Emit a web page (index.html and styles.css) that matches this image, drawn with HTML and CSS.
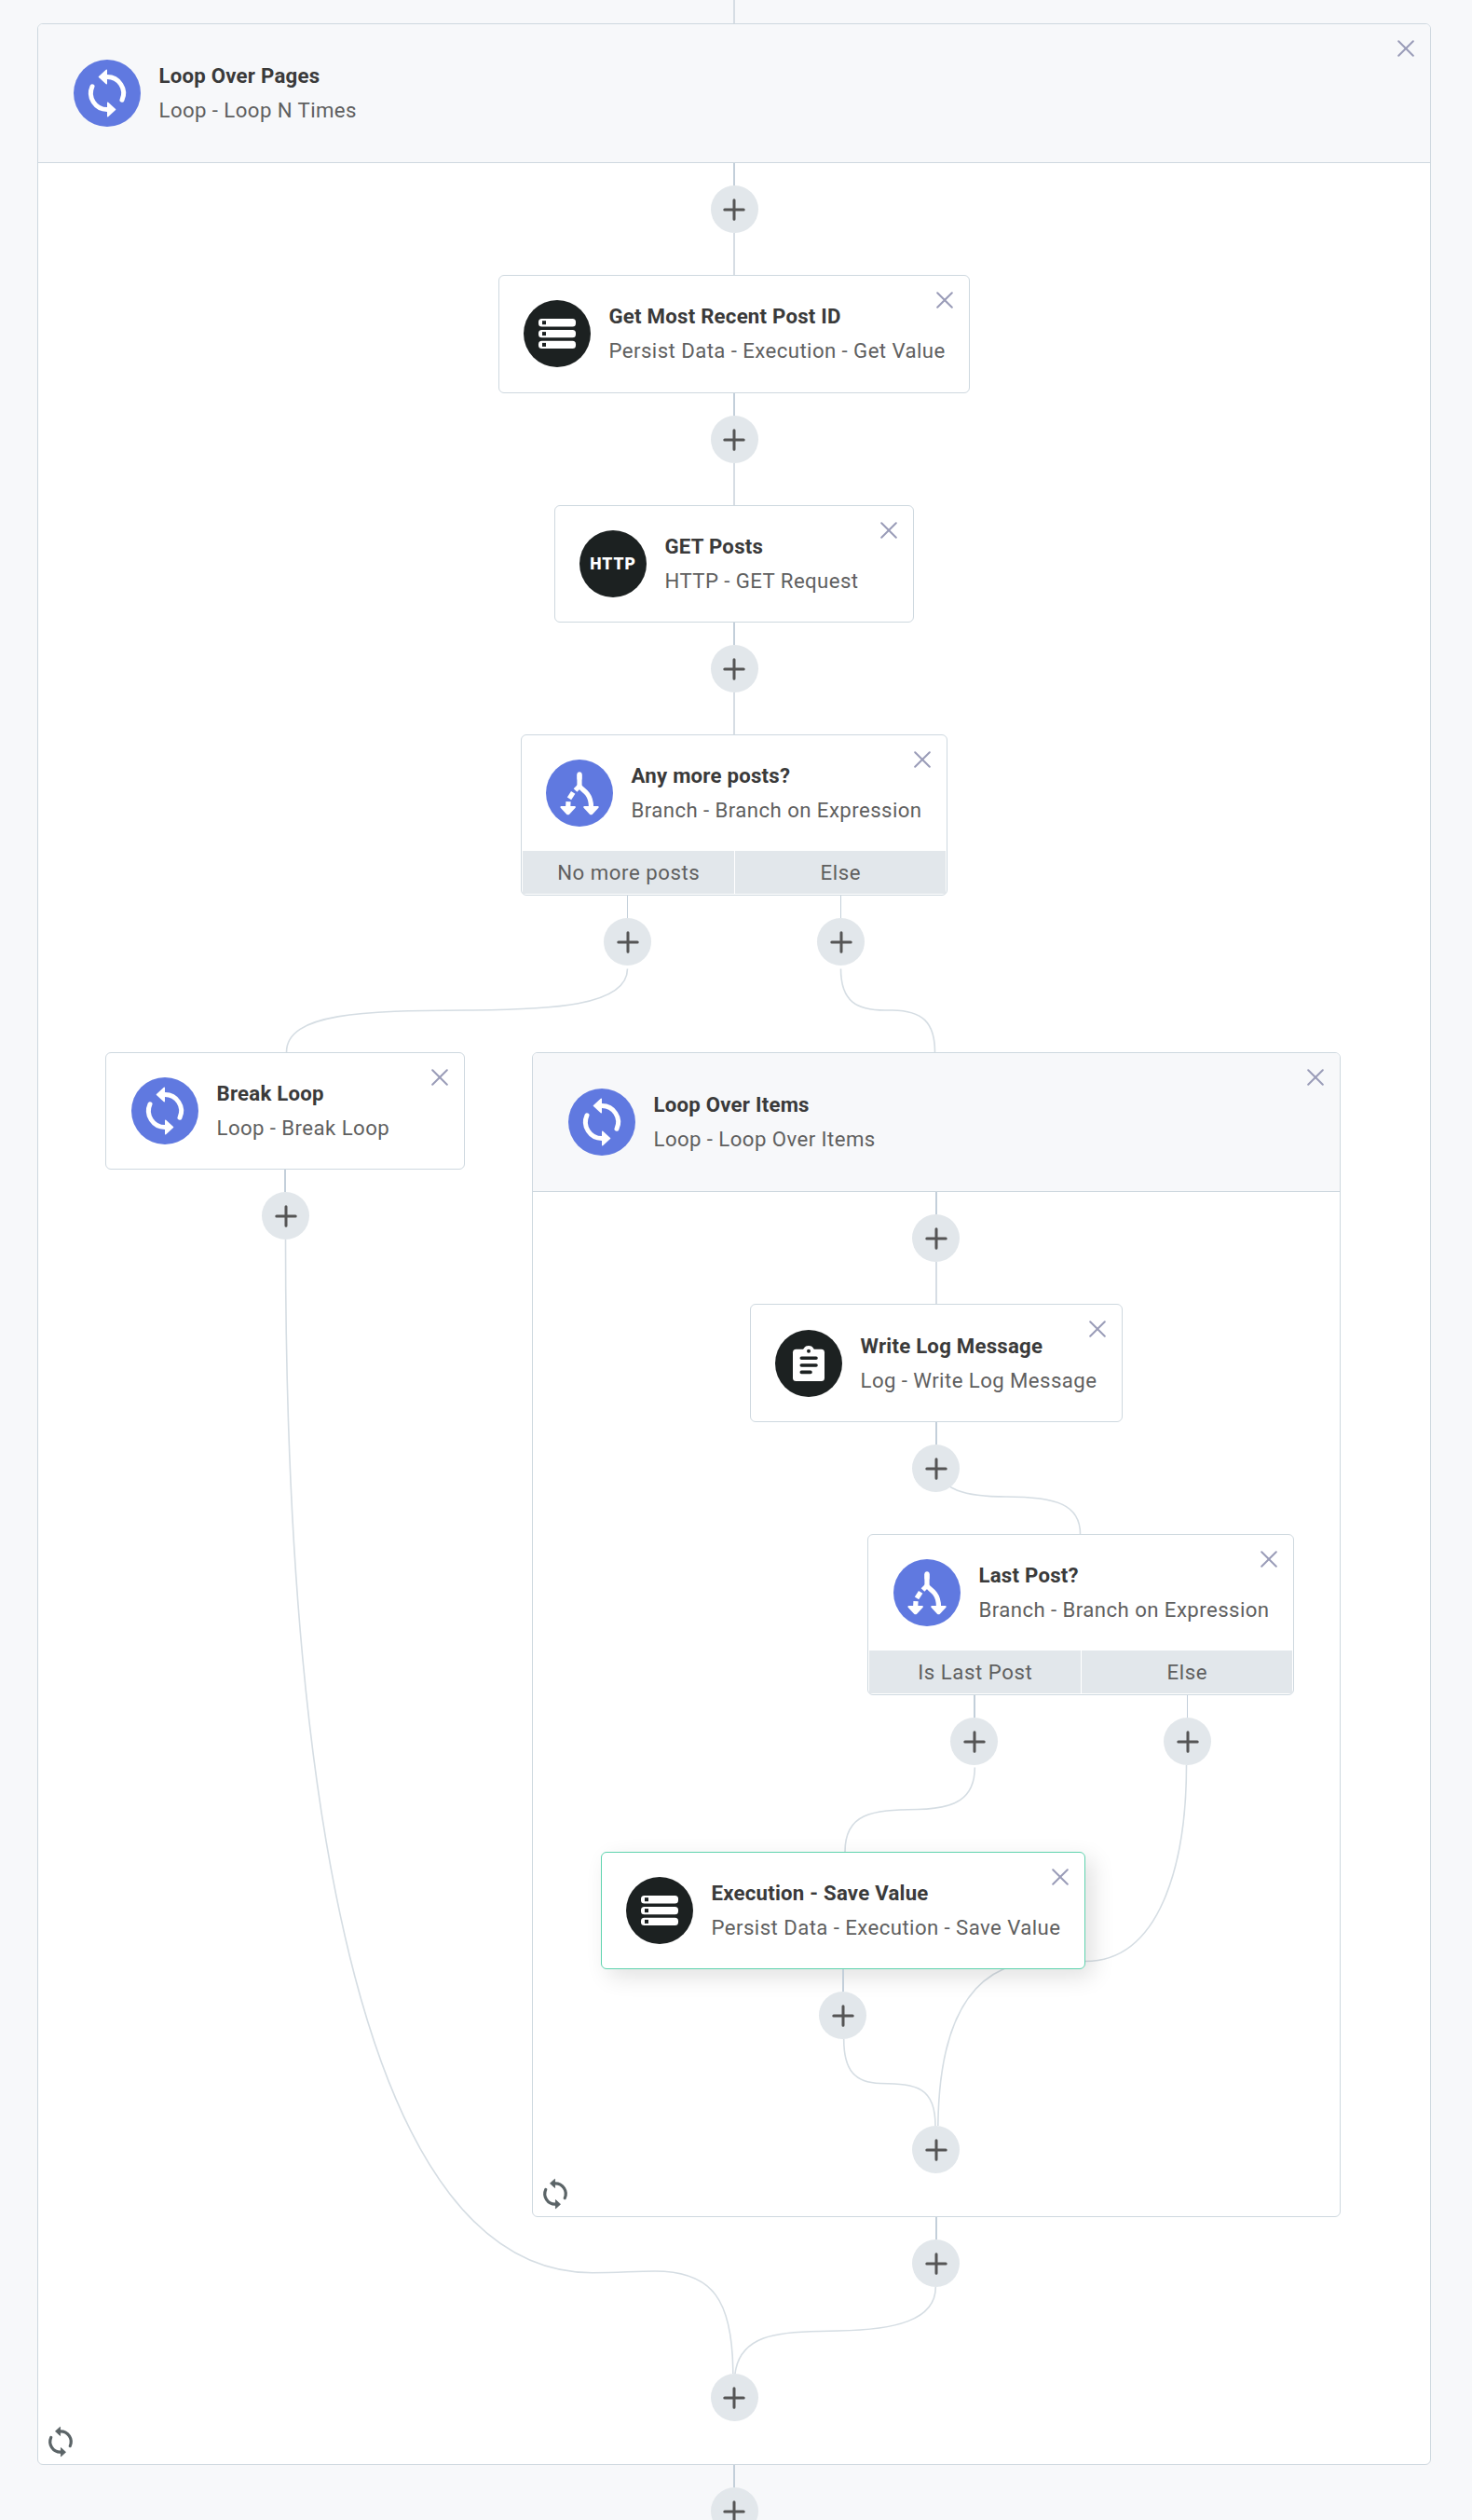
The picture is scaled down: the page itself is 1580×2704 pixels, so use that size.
FILE: index.html
```
<!DOCTYPE html>
<html lang="en">
<head>
  <meta charset="UTF-8" />
  <meta name="viewport" content="width=device-width, initial-scale=1" />
  <title>Workflow Designer</title>
  <link rel="stylesheet" href="styles.css">
</head>
<body>

  <!-- shared icons -->
  <svg class="defs" aria-hidden="true">
    <symbol id="icon-loop" viewBox="0 0 72 72">
      <g fill="none" stroke="currentColor" stroke-width="5" stroke-linecap="round">
        <path d="M34 18.5H36A17.5 17.5 0 0 1 52 43.2" />
        <path d="M38 53.5H36A17.5 17.5 0 0 1 20 28.8" />
      </g>
      <g fill="currentColor" stroke="currentColor" stroke-width="1.4" stroke-linejoin="round">
        <path d="M27.4 18.5L35.3 11.3V25.8Z" />
        <path d="M44.6 53.5L36.7 60.7V46.2Z" />
      </g>
    </symbol>
    <symbol id="icon-branch" viewBox="0 0 72 72">
      <g fill="none" stroke="currentColor" stroke-width="5.2">
        <path d="M36 15.8V28C37 31 41 32.5 44.5 37C47.5 41 48.5 44 48.5 51" stroke-linejoin="round" />
        <path d="M36 15.8V20" stroke-linecap="round" />
        <path d="M36.5 28L31.5 33" />
        <path d="M29.2 35.3L25 41.8" />
        <path d="M24 45.2L23.7 51" />
      </g>
      <g fill="currentColor" stroke="currentColor" stroke-width="2" stroke-linejoin="round">
        <path d="M41.2 51H55.7L49.2 58.2H47.7Z" />
        <path d="M16.4 51H30.9L24.4 58.2H22.9Z" />
      </g>
    </symbol>
    <symbol id="icon-storage" viewBox="0 0 72 72">
      <g fill="currentColor">
        <rect x="16" y="20" width="40" height="8.4" rx="3.5" />
        <rect x="16" y="31.9" width="40" height="8.4" rx="3.5" />
        <rect x="16" y="43.7" width="40" height="8.4" rx="3.5" />
      </g>
      <g fill="#1c2121">
        <rect x="20" y="22.2" width="4" height="4" />
        <rect x="20" y="34.1" width="4" height="4" />
        <rect x="20" y="45.9" width="4" height="4" />
      </g>
    </symbol>
    <symbol id="icon-log" viewBox="0 0 72 72">
      <g fill="currentColor">
        <rect x="19" y="20.7" width="34" height="34.3" rx="3.5" />
        <path d="M29.5 21.5C31 20.5 31 17 36 17S41 20.5 42.5 21.5Z" />
      </g>
      <circle cx="36" cy="22.7" r="2" fill="#1c2121" />
      <path d="M28.3 30.3H44M28.3 38H44M28.3 45.4H38" fill="none" stroke="#1c2121" stroke-width="3.6" stroke-linecap="round" />
    </symbol>
    <symbol id="icon-close" viewBox="0 0 18 18">
      <path d="M1.2 1.2L16.8 16.8M16.8 1.2L1.2 16.8" fill="none" stroke="currentColor" stroke-width="2" stroke-linecap="round" />
    </symbol>
    <symbol id="icon-plus" viewBox="0 0 24 24">
      <path d="M12 1.8V22.2M1.8 12H22.2" fill="none" stroke="currentColor" stroke-width="3" stroke-linecap="round" />
    </symbol>
  </svg>

  <main class="canvas">

    <section class="loop loop-pages">
      <header class="step">
        <span class="step-icon blue"><svg><use href="#icon-loop" /></svg></span>
        <div class="step-text">
          <h2>Loop Over Pages</h2>
          <p>Loop - Loop N Times</p>
        </div>
        <button class="close" aria-label="Remove"><svg><use href="#icon-close" /></svg></button>
      </header>
      <svg class="loop-mark"><use href="#icon-loop" /></svg>
    </section>

    <section class="loop loop-items">
      <header class="step">
        <span class="step-icon blue"><svg><use href="#icon-loop" /></svg></span>
        <div class="step-text">
          <h2>Loop Over Items</h2>
          <p>Loop - Loop Over Items</p>
        </div>
        <button class="close" aria-label="Remove"><svg><use href="#icon-close" /></svg></button>
      </header>
      <svg class="loop-mark"><use href="#icon-loop" /></svg>
    </section>

    <svg class="edges" viewBox="0 0 1580 2704">
      <!-- straight connectors into a step -->
      <g class="edge-in">
        <path d="M788 0V25" />
        <path d="M788 250V295" />
        <path d="M788 497V542" />
        <path d="M788 743V788" />
        <path d="M1005 1354V1399" />
      </g>
      <!-- straight connectors out of a step -->
      <g class="edge-out">
        <path d="M788 175V199" />
        <path d="M788 422V446" />
        <path d="M788 668V692" />
        <path d="M306 1255V1279" />
        <path d="M1005 1279V1303" />
        <path d="M1005 1526V1550" />
        <path d="M1046 1819V1843" />
        <path d="M1005 2379V2403" />
        <path d="M788 2645V2669" />
      </g>
      <g class="edge-out thin">
        <path d="M673.5 961V985" />
        <path d="M902.5 961V985" />
        <path d="M1274.5 1819V1843" />
      </g>
      <!-- branches and joins -->
      <g class="edge-curve">
        <path d="M673.5 1039.5C673.5 1080 590 1083.5 500 1084C390 1084.4 307.5 1087 307.5 1129" />
        <path d="M902.5 1039.5C902.5 1075 920 1084 950 1084H958C990 1084.5 1003.5 1097 1003.5 1129" />
        <path d="M306.5 1330C306.5 1960 395 2439 636 2438.7C665 2438.7 680 2437 703 2437C765 2437 786.5 2468 786.8 2547" />
        <path d="M1006 1576C1010 1598 1035 1606 1080 1606C1135 1606 1159.5 1615 1159.5 1646" />
        <path d="M1046.3 1896.5C1046.3 1930 1025 1941 985 1941.5C935 1942 907 1946 907 1987" />
        <path d="M1273.5 1894C1273.5 2000 1245 2104.5 1165 2104.5C1130 2104.5 1100 2100 1076.8 2113C1038 2130 1008 2175 1006.8 2281" />
        <path d="M905.7 2188C905.7 2222 918 2235 945 2235.5C985 2236 1004 2240 1004 2281" />
        <path d="M1004.3 2454C1004.3 2490 960 2500 900 2501L880 2501.5C835 2502 794 2506 789 2547" />
      </g>
    </svg>

    <article class="card get-post-id">
      <div class="step">
        <span class="step-icon dark"><svg><use href="#icon-storage" /></svg></span>
        <div class="step-text">
          <h2>Get Most Recent Post ID</h2>
          <p>Persist Data - Execution - Get Value</p>
        </div>
        <button class="close" aria-label="Remove"><svg><use href="#icon-close" /></svg></button>
      </div>
    </article>

    <article class="card get-posts">
      <div class="step">
        <span class="step-icon dark http">HTTP</span>
        <div class="step-text">
          <h2>GET Posts</h2>
          <p>HTTP - GET Request</p>
        </div>
        <button class="close" aria-label="Remove"><svg><use href="#icon-close" /></svg></button>
      </div>
    </article>

    <article class="card any-more">
      <div class="step">
        <span class="step-icon blue"><svg><use href="#icon-branch" /></svg></span>
        <div class="step-text">
          <h2>Any more posts?</h2>
          <p>Branch - Branch on Expression</p>
        </div>
        <button class="close" aria-label="Remove"><svg><use href="#icon-close" /></svg></button>
      </div>
      <div class="branches">
        <span>No more posts</span>
        <span>Else</span>
      </div>
    </article>

    <article class="card break-loop">
      <div class="step">
        <span class="step-icon blue"><svg><use href="#icon-loop" /></svg></span>
        <div class="step-text">
          <h2>Break Loop</h2>
          <p>Loop - Break Loop</p>
        </div>
        <button class="close" aria-label="Remove"><svg><use href="#icon-close" /></svg></button>
      </div>
    </article>

    <article class="card write-log">
      <div class="step">
        <span class="step-icon dark"><svg><use href="#icon-log" /></svg></span>
        <div class="step-text">
          <h2>Write Log Message</h2>
          <p>Log - Write Log Message</p>
        </div>
        <button class="close" aria-label="Remove"><svg><use href="#icon-close" /></svg></button>
      </div>
    </article>

    <article class="card last-post">
      <div class="step">
        <span class="step-icon blue"><svg><use href="#icon-branch" /></svg></span>
        <div class="step-text">
          <h2>Last Post?</h2>
          <p>Branch - Branch on Expression</p>
        </div>
        <button class="close" aria-label="Remove"><svg><use href="#icon-close" /></svg></button>
      </div>
      <div class="branches">
        <span>Is Last Post</span>
        <span>Else</span>
      </div>
    </article>

    <article class="card save-value selected">
      <div class="step">
        <span class="step-icon dark"><svg><use href="#icon-storage" /></svg></span>
        <div class="step-text">
          <h2>Execution - Save Value</h2>
          <p>Persist Data - Execution - Save Value</p>
        </div>
        <button class="close" aria-label="Remove"><svg><use href="#icon-close" /></svg></button>
      </div>
    </article>

    <!-- stays above the shadow of the selected card -->
    <svg class="edges" viewBox="0 0 1580 2704">
      <g class="edge-out">
        <path d="M905 2113V2137" />
      </g>
    </svg>

    <button class="add add-pages-start" aria-label="Add step"><svg><use href="#icon-plus" /></svg></button>
    <button class="add add-after-post-id" aria-label="Add step"><svg><use href="#icon-plus" /></svg></button>
    <button class="add add-after-get-posts" aria-label="Add step"><svg><use href="#icon-plus" /></svg></button>
    <button class="add add-no-more" aria-label="Add step"><svg><use href="#icon-plus" /></svg></button>
    <button class="add add-more-else" aria-label="Add step"><svg><use href="#icon-plus" /></svg></button>
    <button class="add add-after-break" aria-label="Add step"><svg><use href="#icon-plus" /></svg></button>
    <button class="add add-items-start" aria-label="Add step"><svg><use href="#icon-plus" /></svg></button>
    <button class="add add-after-log" aria-label="Add step"><svg><use href="#icon-plus" /></svg></button>
    <button class="add add-is-last" aria-label="Add step"><svg><use href="#icon-plus" /></svg></button>
    <button class="add add-last-else" aria-label="Add step"><svg><use href="#icon-plus" /></svg></button>
    <button class="add add-after-save" aria-label="Add step"><svg><use href="#icon-plus" /></svg></button>
    <button class="add add-items-end" aria-label="Add step"><svg><use href="#icon-plus" /></svg></button>
    <button class="add add-after-items" aria-label="Add step"><svg><use href="#icon-plus" /></svg></button>
    <button class="add add-pages-end" aria-label="Add step"><svg><use href="#icon-plus" /></svg></button>
    <button class="add add-after-pages" aria-label="Add step"><svg><use href="#icon-plus" /></svg></button>

  </main>
</body>
</html>
```
FILE: styles.css
```
* {
  box-sizing: border-box;
}
html, body {
  margin: 0;
  padding: 0;
  background: #f7f8fa;
  font-family: Roboto, "Liberation Sans", sans-serif;
  font-size: 22.2px;
  color: #5f5f5f;
}
button {
  padding: 0;
  border: none;
  background: none;
  cursor: pointer;
}
svg {
  display: block;
}
.defs {
  position: absolute;
  width: 0;
  height: 0;
}
.canvas {
  position: relative;
  width: 1580px;
  height: 2704px;
  overflow: hidden;
}

/* Connectors */
.edges {
  position: absolute;
  left: 0;
  top: 0;
  width: 1580px;
  height: 2704px;
  fill: none;
  pointer-events: none;
}
.edge-in {
  stroke: #d6dde4;
  stroke-width: 2;
}
.edge-out {
  stroke: #c3cfda;
  stroke-width: 2;
}
.edge-out.thin {
  stroke-width: 1;
}
.edge-curve {
  stroke: #d5dde3;
  stroke-width: 1.6;
}

/* Steps */
.step {
  position: relative;
  display: flex;
  align-items: center;
  gap: 19.5px;
  padding: 26px;
}
.step-icon {
  flex: none;
  display: flex;
  align-items: center;
  justify-content: center;
  width: 72px;
  height: 72px;
  border-radius: 50%;
  color: #fff;
}
.step-icon svg {
  width: 72px;
  height: 72px;
}
.blue {
  background: #6079e0;
}
.dark {
  background: #1c2121;
}
.http {
  font-size: 17.5px;
  font-weight: 900;
  letter-spacing: 1px;
}
.step-text {
  white-space: nowrap;
  margin: -1px 0;
}
.step-text h2 {
  margin: 0;
  font-size: 22.2px;
  font-weight: 700;
  line-height: 37px;
  letter-spacing: 0.24px;
  color: #3a3a3a;
}
.step-text p {
  margin: 0;
  line-height: 37px;
  letter-spacing: 0.43px;
}
.close {
  position: absolute;
  top: 17px;
  right: 17px;
  width: 18px;
  height: 18px;
  color: #9a9cb8;
}
.close svg {
  width: 18px;
  height: 18px;
}

/* Cards */
.card {
  position: absolute;
  height: 126px;
  background: #fff;
  border: 1px solid #ced8df;
  border-radius: 6px;
}
.card.selected {
  border-color: #5fd3ae;
  box-shadow: 8px 8px 24px rgba(0, 0, 0, 0.12);
}
.branches {
  display: flex;
  gap: 1px;
  padding: 0 1px 1px;
}
.branches span {
  flex: 1;
  height: 46px;
  line-height: 46px;
  padding-left: 1px;
  text-align: center;
  letter-spacing: 0.56px;
  background: #e2e7eb;
}
.get-post-id { left: 535px; top: 295px; width: 506px; height: 127px; }
.get-posts { left: 595px; top: 542px; width: 386px; }
.any-more { left: 559px; top: 788px; width: 458px; height: 173px; }
.break-loop { left: 113px; top: 1129px; width: 386px; }
.write-log { left: 805px; top: 1399px; width: 400px; height: 127px; }
.last-post { left: 931px; top: 1646px; width: 458px; height: 173px; }
.save-value { left: 645px; top: 1987px; width: 520px; }
.break-loop .step,
.last-post .step { padding-left: 27px; }
.write-log .step { padding-top: 27px; }

/* Loops */
.loop {
  position: absolute;
  background: #fff;
  border: 1px solid #ced8df;
  border-radius: 6px;
}
.loop .step {
  height: 149px;
  padding: 0 38px;
  background: #f7f8fa;
  border-bottom: 1px solid #ced8df;
  border-radius: 5px 5px 0 0;
}
.loop-mark {
  position: absolute;
  left: 1px;
  bottom: 1px;
  width: 46px;
  height: 46px;
  color: #5b6467;
}
.loop-pages { left: 40px; top: 25px; width: 1496px; height: 2620px; }
.loop-items { left: 571px; top: 1129px; width: 868px; height: 1250px; }

/* Add buttons */
.add {
  position: absolute;
  display: flex;
  align-items: center;
  justify-content: center;
  width: 51px;
  height: 51px;
  border-radius: 50%;
  background: #e2e7eb;
  color: #555;
}
.add svg {
  width: 24px;
  height: 24px;
}
.add-pages-start { left: 762.5px; top: 199px; }
.add-after-post-id { left: 762.5px; top: 446px; }
.add-after-get-posts { left: 762.5px; top: 692px; }
.add-no-more { left: 648px; top: 985px; }
.add-more-else { left: 877px; top: 985px; }
.add-after-break { left: 281px; top: 1279px; }
.add-items-start { left: 979px; top: 1303px; }
.add-after-log { left: 979px; top: 1550px; }
.add-is-last { left: 1020px; top: 1843px; }
.add-last-else { left: 1249px; top: 1843px; }
.add-after-save { left: 879px; top: 2137px; }
.add-items-end { left: 979px; top: 2281px; }
.add-after-items { left: 979px; top: 2403px; }
.add-pages-end { left: 762.5px; top: 2547px; }
.add-after-pages { left: 762.5px; top: 2669px; }
```
